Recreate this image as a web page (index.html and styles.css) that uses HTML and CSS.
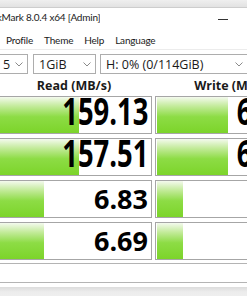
FILE: index.html
```html
<!DOCTYPE html>
<html lang="en">
<head>
  <meta charset="UTF-8">
  <meta name="viewport" content="width=device-width, initial-scale=1.0">
  <title>CrystalDiskMark</title>
  <link rel="stylesheet" href="styles.css">
</head>
<body>
  <div class="top-strip"></div>

  <div class="titlebar">
    <span class="title">DiskMark 8.0.4 x64 [Admin]</span>
    <span class="minimize"></span>
  </div>

  <div class="menubar">
    <span>Profile</span>
    <span>Theme</span>
    <span>Help</span>
    <span>Language</span>
  </div>

  <div class="controls">
    <div class="combo count">5 <svg width="8" height="5" viewBox="0 0 8 5"><polyline points="0.5,0.5 4,4 7.5,0.5" fill="none" stroke="#8a8a8a" stroke-width="1"/></svg></div>
    <div class="combo size">1GiB <svg width="8" height="5" viewBox="0 0 8 5"><polyline points="0.5,0.5 4,4 7.5,0.5" fill="none" stroke="#8a8a8a" stroke-width="1"/></svg></div>
    <div class="combo drive">H: 0% (0/114GiB) <svg width="8" height="5" viewBox="0 0 8 5"><polyline points="0.5,0.5 4,4 7.5,0.5" fill="none" stroke="#8a8a8a" stroke-width="1"/></svg></div>
  </div>

  <div class="headers">
    <div>Read (MB/s)</div>
    <div>Write (MB/s)</div>
  </div>

  <div class="results">
    <div class="cell big"><div class="bar" style="width: 52.6%"></div><span class="val">159.13</span></div>
    <div class="cell big"><div class="bar" style="width: 46.1%"></div><span class="val">65.92</span></div>
    <div class="cell big"><div class="bar" style="width: 52.6%"></div><span class="val">157.51</span></div>
    <div class="cell big"><div class="bar" style="width: 46.1%"></div><span class="val">64.81</span></div>
    <div class="cell small"><div class="bar" style="width: 29.9%"></div><span class="val">6.83</span></div>
    <div class="cell small"><div class="bar" style="width: 17.2%"></div><span class="val">2.41</span></div>
    <div class="cell small"><div class="bar" style="width: 29.9%"></div><span class="val">6.69</span></div>
    <div class="cell small"><div class="bar" style="width: 17.2%"></div><span class="val">2.37</span></div>
  </div>

  <div class="comment"></div>
  <div class="statusbar"></div>
</body>
</html>
```

FILE: styles.css
```css
body {
  margin: 0;
  width: 247px;
  height: 296px;
  overflow: hidden;
  background-color: #fff;
  color: #1a1a1a;
  font-family: 'Lato', 'Open Sans', sans-serif;
}
.top-strip {
  height: 7px;
  background: linear-gradient(#efefef, #e2e2e2);
  border-bottom: 1px solid #cdcdcd;
}
.titlebar {
  height: 22px;
  display: flex;
  justify-content: space-between;
  align-items: flex-start;
}
.title {
  font-size: 10px;
  line-height: 18px;
  letter-spacing: -0.2px;
  text-indent: -17px;
  white-space: nowrap;
  overflow: hidden;
}
.minimize {
  width: 10px;
  height: 1px;
  margin-top: 11px;
  margin-right: 19px;
  background-color: #333;
}
.menubar {
  height: 19px;
  display: flex;
  align-items: center;
  gap: 11px;
  padding-left: 6px;
  font-size: 10px;
  letter-spacing: -0.2px;
  border-bottom: 1px solid #ececec;
}
.controls {
  display: flex;
  padding-top: 4px;
  font-family: 'Open Sans', sans-serif;
  font-size: 12.5px;
}
.combo {
  height: 20px;
  box-sizing: border-box;
  border: 1px solid #adadad;
  display: flex;
  align-items: center;
  justify-content: space-between;
  white-space: nowrap;
  flex-shrink: 0;
}
.count {
  width: 32px;
  margin-left: -4px;
  padding: 0 4px 0 6px;
}
.size {
  width: 63px;
  margin-left: 5px;
  padding: 0 4px 0 5px;
}
.drive {
  flex: 1;
  margin-left: 4px;
  margin-right: -3px;
  padding: 0 6px 0 5px;
}
.headers {
  display: grid;
  grid-template-columns: 156px 156px;
  column-gap: 3px;
  margin-left: -4px;
  padding-top: 2px;
  height: 20px;
  line-height: 20px;
  text-align: center;
  font-family: 'Open Sans', sans-serif;
  font-weight: bold;
  font-size: 12.5px;
  white-space: nowrap;
}
.results {
  display: grid;
  grid-template-columns: 156px 156px;
  grid-auto-rows: 38px;
  column-gap: 3px;
  row-gap: 4px;
  margin-left: -4px;
}
.cell {
  position: relative;
  box-sizing: border-box;
  border: 1px solid #a6a6a6;
  background-color: #fff;
  display: flex;
  align-items: center;
  justify-content: flex-end;
  padding-right: 3px;
  overflow: hidden;
}
.bar {
  position: absolute;
  left: 1px;
  top: 0;
  bottom: 0;
  background: linear-gradient(#f4faee 0%, #c4eb9c 25%, #8ddc45 55%, #7cd42a 100%);
}
.val {
  position: relative;
  font-family: 'Open Sans', sans-serif;
  font-weight: bold;
  color: #000;
  white-space: nowrap;
}
.big .val {
  font-size: 37px;
  line-height: 38px;
  transform: translateY(-4px) scaleX(0.74);
  transform-origin: right center;
}
.small .val {
  font-size: 27px;
  line-height: 30px;
}
.comment {
  height: 20px;
  box-sizing: border-box;
  margin-top: 3px;
  border-top: 1px solid #b4b4b4;
  border-bottom: 1px solid #b4b4b4;
}
.statusbar {
  margin-top: 4px;
  height: 12px;
  background: linear-gradient(#dcdcdc, #ececec 40%, #f0f0f0);
}
```
